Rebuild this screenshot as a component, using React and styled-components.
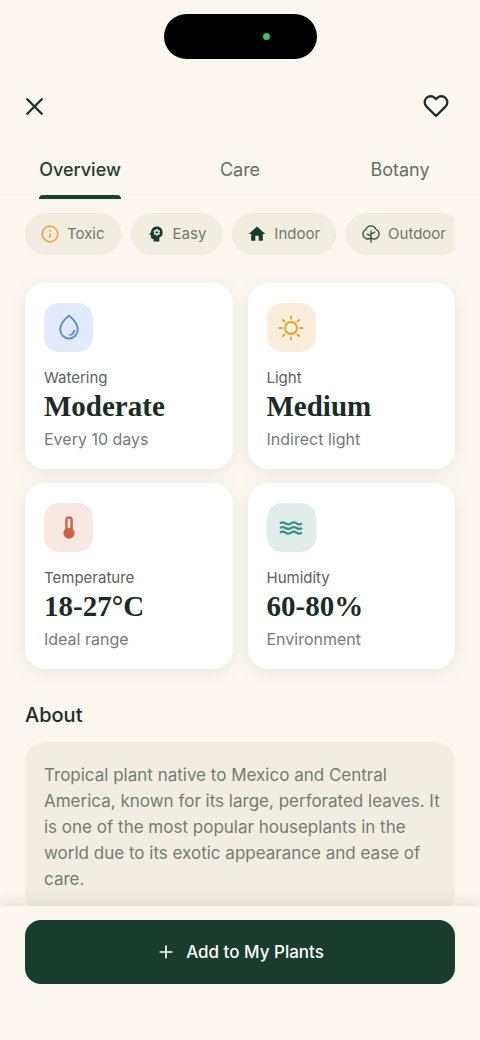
import React from 'react';
import styled, { createGlobalStyle } from 'styled-components';
import { PiDrop, PiTree } from 'react-icons/pi';
import { MdPsychology, MdHome } from 'react-icons/md';
import { Plus, X } from 'lucide-react';

const GlobalStyle = createGlobalStyle`
  * { box-sizing: border-box; }
  body { margin: 0; background: #fbf6ef; }
  button { font: inherit; border: 0; background: none; padding: 0; cursor: pointer; }
  h2, p, ul { margin: 0; padding: 0; }
`;

const Screen = styled.div`
  height: 100vh;
  display: flex;
  flex-direction: column;
  background: #fbf6ef;
  color: #1b2e25;
  font-family: Inter, "Liberation Sans", sans-serif;
`;

const StatusArea = styled.div`
  padding: 14px 0 22px;
  display: flex;
  justify-content: center;
`;

const Island = styled.div`
  width: 153px;
  height: 45px;
  border-radius: 23px;
  background: #000;
  display: flex;
  align-items: center;
  justify-content: flex-end;
  padding-right: 47px;
`;

const CameraDot = styled.span`
  width: 7px;
  height: 7px;
  border-radius: 50%;
  background: #34c759;
`;

const Header = styled.header`
  display: flex;
  justify-content: space-between;
  padding: 8px 28px 8px 18px;
`;

const IconButton = styled.button`
  width: 32px;
  height: 34px;
  display: flex;
  align-items: center;
  justify-content: center;
  color: #1b2e25;
`;

const Tabs = styled.nav`
  display: flex;
  margin-top: 10px;
  border-bottom: 1px solid #f4efe7;
`;

const TabCell = styled.div`
  flex: 1;
  display: flex;
  justify-content: center;
`;

const Tab = styled.button`
  position: relative;
  height: 58px;
  padding-bottom: 18px;
  display: flex;
  align-items: flex-end;
  font-size: 18px;
  line-height: 22px;
  font-weight: ${(p) => (p.$active ? 500 : 400)};
  color: ${(p) => (p.$active ? '#1c3f2e' : '#636f66')};

  &::after {
    content: '';
    display: ${(p) => (p.$active ? 'block' : 'none')};
    position: absolute;
    left: 0;
    right: 0;
    bottom: 0;
    height: 4px;
    border-radius: 4px 4px 0 0;
    background: #1a3f2d;
  }
`;

const Content = styled.main`
  flex: 1;
  min-height: 0;
  overflow-y: auto;
  scrollbar-width: none;
  padding: 13px 25px 20px;
`;

const Chips = styled.ul`
  display: flex;
  gap: 10px;
  overflow-x: auto;
  scrollbar-width: none;
  list-style: none;
`;

const Chip = styled.li`
  flex: none;
  height: 42px;
  padding: 0 15px;
  display: flex;
  align-items: center;
  gap: 8px;
  border: 1px solid #eeeae0;
  border-radius: 21px;
  background: #f2ede2;
  color: #6f776e;
  font-size: 15px;
  line-height: 20px;
`;

const ChipIcon = styled.span`
  width: 18px;
  display: flex;
  justify-content: center;
  color: ${(p) => p.$tint};

  svg { flex: none; }
`;

const Grid = styled.div`
  display: grid;
  grid-template-columns: 1fr 1fr;
  gap: 14px 15px;
  margin-top: 28px;
`;

const Card = styled.section`
  padding: 20px 19px;
  border-radius: 20px;
  background: #fff;
  box-shadow: 0 4px 16px rgba(60, 60, 30, 0.08);
`;

const IconTile = styled.div`
  width: 49px;
  height: 49px;
  border-radius: 15px;
  display: flex;
  align-items: center;
  justify-content: center;
  color: ${(p) => p.$tint};
  background: ${(p) => p.$bg};
`;

const CardLabel = styled.p`
  margin-top: 16px;
  font-size: 15px;
  line-height: 20px;
  color: #56625b;
`;

const CardValue = styled.p`
  font-family: "Liberation Serif", serif;
  font-weight: 700;
  font-size: 29px;
  line-height: 36px;
  color: #1b2b25;
`;

const CardNote = styled.p`
  margin-top: 5px;
  font-size: 16px;
  line-height: 20px;
  color: #737b76;
`;

const SectionTitle = styled.h2`
  margin-top: 33px;
  font-size: 20px;
  line-height: 26px;
  font-weight: 500;
`;

const AboutBox = styled.div`
  margin-top: 14px;
  padding: 20px 12px 20px 19px;
  border-radius: 20px;
  background: #f2ede2;
  color: #747b72;
  font-size: 17px;
  line-height: 26px;
`;

const Footer = styled.footer`
  position: relative;
  padding: 14px 25px 56px;
  background: #fbf6ef;
  box-shadow: 0 -4px 12px rgba(60, 60, 30, 0.1);
`;

const AddButton = styled.button`
  width: 100%;
  height: 64px;
  border-radius: 16px;
  background: #183d2c;
  color: #fff;
  display: flex;
  align-items: center;
  justify-content: center;
  gap: 10px;
  font-size: 17px;
  font-weight: 500;
`;

const HeartIcon = () => (
  <svg width="26" height="26" viewBox="0 0 24 24" fill="none" stroke="currentColor" strokeWidth="2.1" strokeLinecap="round" strokeLinejoin="round" aria-hidden="true">
    <path d="M20.84 4.61a5.5 5.5 0 0 0-7.78 0L12 5.67l-1.06-1.06a5.5 5.5 0 0 0-7.78 7.78l1.06 1.06L12 21.23l7.78-7.78 1.06-1.06a5.5 5.5 0 0 0 0-7.78z" />
  </svg>
);

const InfoIcon = () => (
  <svg width="18" height="18" viewBox="0 0 18 18" fill="none" stroke="currentColor" aria-hidden="true">
    <circle cx="9" cy="9" r="7.8" strokeWidth="1.7" />
    <path d="M9 8.2v4.6" strokeWidth="1.7" />
    <circle cx="9" cy="5.7" r="1" fill="currentColor" stroke="none" />
  </svg>
);

const SunIcon = () => (
  <svg width="26" height="26" viewBox="0 0 26 26" fill="none" stroke="currentColor" strokeWidth="1.8" strokeLinecap="round" aria-hidden="true">
    <circle cx="13" cy="13" r="6" />
    {[0, 45, 90, 135, 180, 225, 270, 315].map((a) => (
      <path key={a} d="M13 1.5v2.2" transform={`rotate(${a} 13 13)`} />
    ))}
  </svg>
);

const ThermometerIcon = () => (
  <svg width="26" height="26" viewBox="0 0 26 26" aria-hidden="true">
    <path
      d="M9.2 5a3.8 3.8 0 0 1 7.6 0v9a5.6 5.6 0 1 1-7.6 0zM11.6 5.2v6.6a1.4 1.4 0 0 0 2.8 0V5.2a1.4 1.4 0 0 0-2.8 0z"
      fill="currentColor"
      fillRule="evenodd"
    />
  </svg>
);

const wave = (y) =>
  `M2 ${y}c1.8-1.3 3.6-1.3 5.5 0s3.7 1.3 5.5 0 3.7-1.3 5.5 0 3.7 1.3 5.5 0`;

const WavesIcon = () => (
  <svg width="26" height="26" viewBox="0 0 26 26" fill="none" stroke="currentColor" strokeWidth="2.2" aria-hidden="true">
    <path d={wave(8.4)} />
    <path d={wave(13)} />
    <path d={wave(17.6)} />
  </svg>
);

const chips = [
  { label: 'Toxic', tint: '#f0a637', icon: <InfoIcon /> },
  { label: 'Easy', tint: '#183d2c', icon: <MdPsychology size={20} /> },
  { label: 'Indoor', tint: '#183d2c', icon: <MdHome size={20} /> },
  { label: 'Outdoor', tint: '#2b4a3a', icon: <PiTree size={20} /> },
];

const cards = [
  { label: 'Watering', value: 'Moderate', note: 'Every 10 days', tint: '#4a83e8', bg: '#e2ebfd', icon: <PiDrop size={28} /> },
  { label: 'Light', value: 'Medium', note: 'Indirect light', tint: '#dfa02f', bg: '#f8eedb', icon: <SunIcon /> },
  { label: 'Temperature', value: '18-27°C', note: 'Ideal range', tint: '#cc6244', bg: '#f7e8e4', icon: <ThermometerIcon /> },
  { label: 'Humidity', value: '60-80%', note: 'Environment', tint: '#36917f', bg: '#e0edec', icon: <WavesIcon /> },
];

const tabs = ['Overview', 'Care', 'Botany'];

export default function App() {
  return (
    <Screen>
      <GlobalStyle />
      <StatusArea>
        <Island><CameraDot /></Island>
      </StatusArea>
      <Header>
        <IconButton aria-label="Close"><X size={29} strokeWidth={1.9} /></IconButton>
        <IconButton aria-label="Favourite"><HeartIcon /></IconButton>
      </Header>
      <Tabs>
        {tabs.map((tab, i) => (
          <TabCell key={tab}><Tab $active={i === 0}>{tab}</Tab></TabCell>
        ))}
      </Tabs>
      <Content>
        <Chips>
          {chips.map((c) => (
            <Chip key={c.label}><ChipIcon $tint={c.tint}>{c.icon}</ChipIcon>{c.label}</Chip>
          ))}
        </Chips>
        <Grid>
          {cards.map((c) => (
            <Card key={c.label}>
              <IconTile $tint={c.tint} $bg={c.bg}>{c.icon}</IconTile>
              <CardLabel>{c.label}</CardLabel>
              <CardValue>{c.value}</CardValue>
              <CardNote>{c.note}</CardNote>
            </Card>
          ))}
        </Grid>
        <SectionTitle>About</SectionTitle>
        <AboutBox>
          <p>
            Tropical plant native to Mexico and Central America, known for its large,
            perforated leaves. It is one of the most popular houseplants in the world due
            to its exotic appearance and ease of care.
          </p>
        </AboutBox>
      </Content>
      <Footer>
        <AddButton><Plus size={20} strokeWidth={2} />Add to My Plants</AddButton>
      </Footer>
    </Screen>
  );
}
